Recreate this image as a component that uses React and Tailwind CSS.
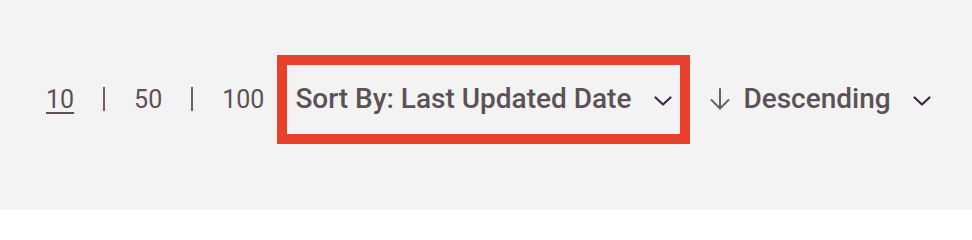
const font = { fontFamily: "Roboto, 'Liberation Sans', sans-serif" };

const Chevron = ({ className }) => (
  <svg width="18" height="10" viewBox="0 0 18 10" fill="none" className={className}>
    <polyline points="1.5,1.5 9,8.5 16.5,1.5" stroke="currentColor" strokeWidth="2.2" strokeLinecap="round" strokeLinejoin="round" />
  </svg>
);

const ArrowDown = ({ className }) => (
  <svg width="20" height="22" viewBox="0 0 20 22" fill="none" className={className}>
    <line x1="10" y1="1" x2="10" y2="20.5" stroke="currentColor" strokeWidth="2" strokeLinecap="round" />
    <polyline points="1.5,12 10,20.5 18.5,12" stroke="currentColor" strokeWidth="2" strokeLinecap="round" strokeLinejoin="round" />
  </svg>
);

const App = () => {
  return (
    <div
      className="w-[972px] h-[210px] bg-[#f3f3f3] flex items-center pl-[46px] pb-[12px] text-[#5d5057]"
      style={font}
    >
      {/* Page size */}
      <div className="flex items-center text-[25px] leading-none">
        <a className="underline underline-offset-[4px] decoration-2">10</a>
        <span className="w-[2px] h-[24px] bg-[#6b5f65] mx-[29px]" />
        <a>50</a>
        <span className="w-[2px] h-[24px] bg-[#6b5f65] mx-[29px]" />
        <a>100</a>
      </div>

      {/* Sort by (highlighted) */}
      <div className="ml-[13px] border-[10px] border-[#e8412b] h-[89px] px-[8px] flex items-center">
        <span className="text-[28px] font-medium leading-none">Sort By: Last Updated Date</span>
        <Chevron className="ml-[23px] mt-[3px] text-[#3d2743]" />
      </div>

      {/* Direction */}
      <div className="ml-[20px] flex items-center">
        <ArrowDown className="text-[#6b5f65]" />
        <span className="ml-[13px] text-[28px] font-medium leading-none">Descending</span>
        <Chevron className="ml-[22px] mt-[3px] text-[#3d2743]" />
      </div>
    </div>
  );
};

export default App;
